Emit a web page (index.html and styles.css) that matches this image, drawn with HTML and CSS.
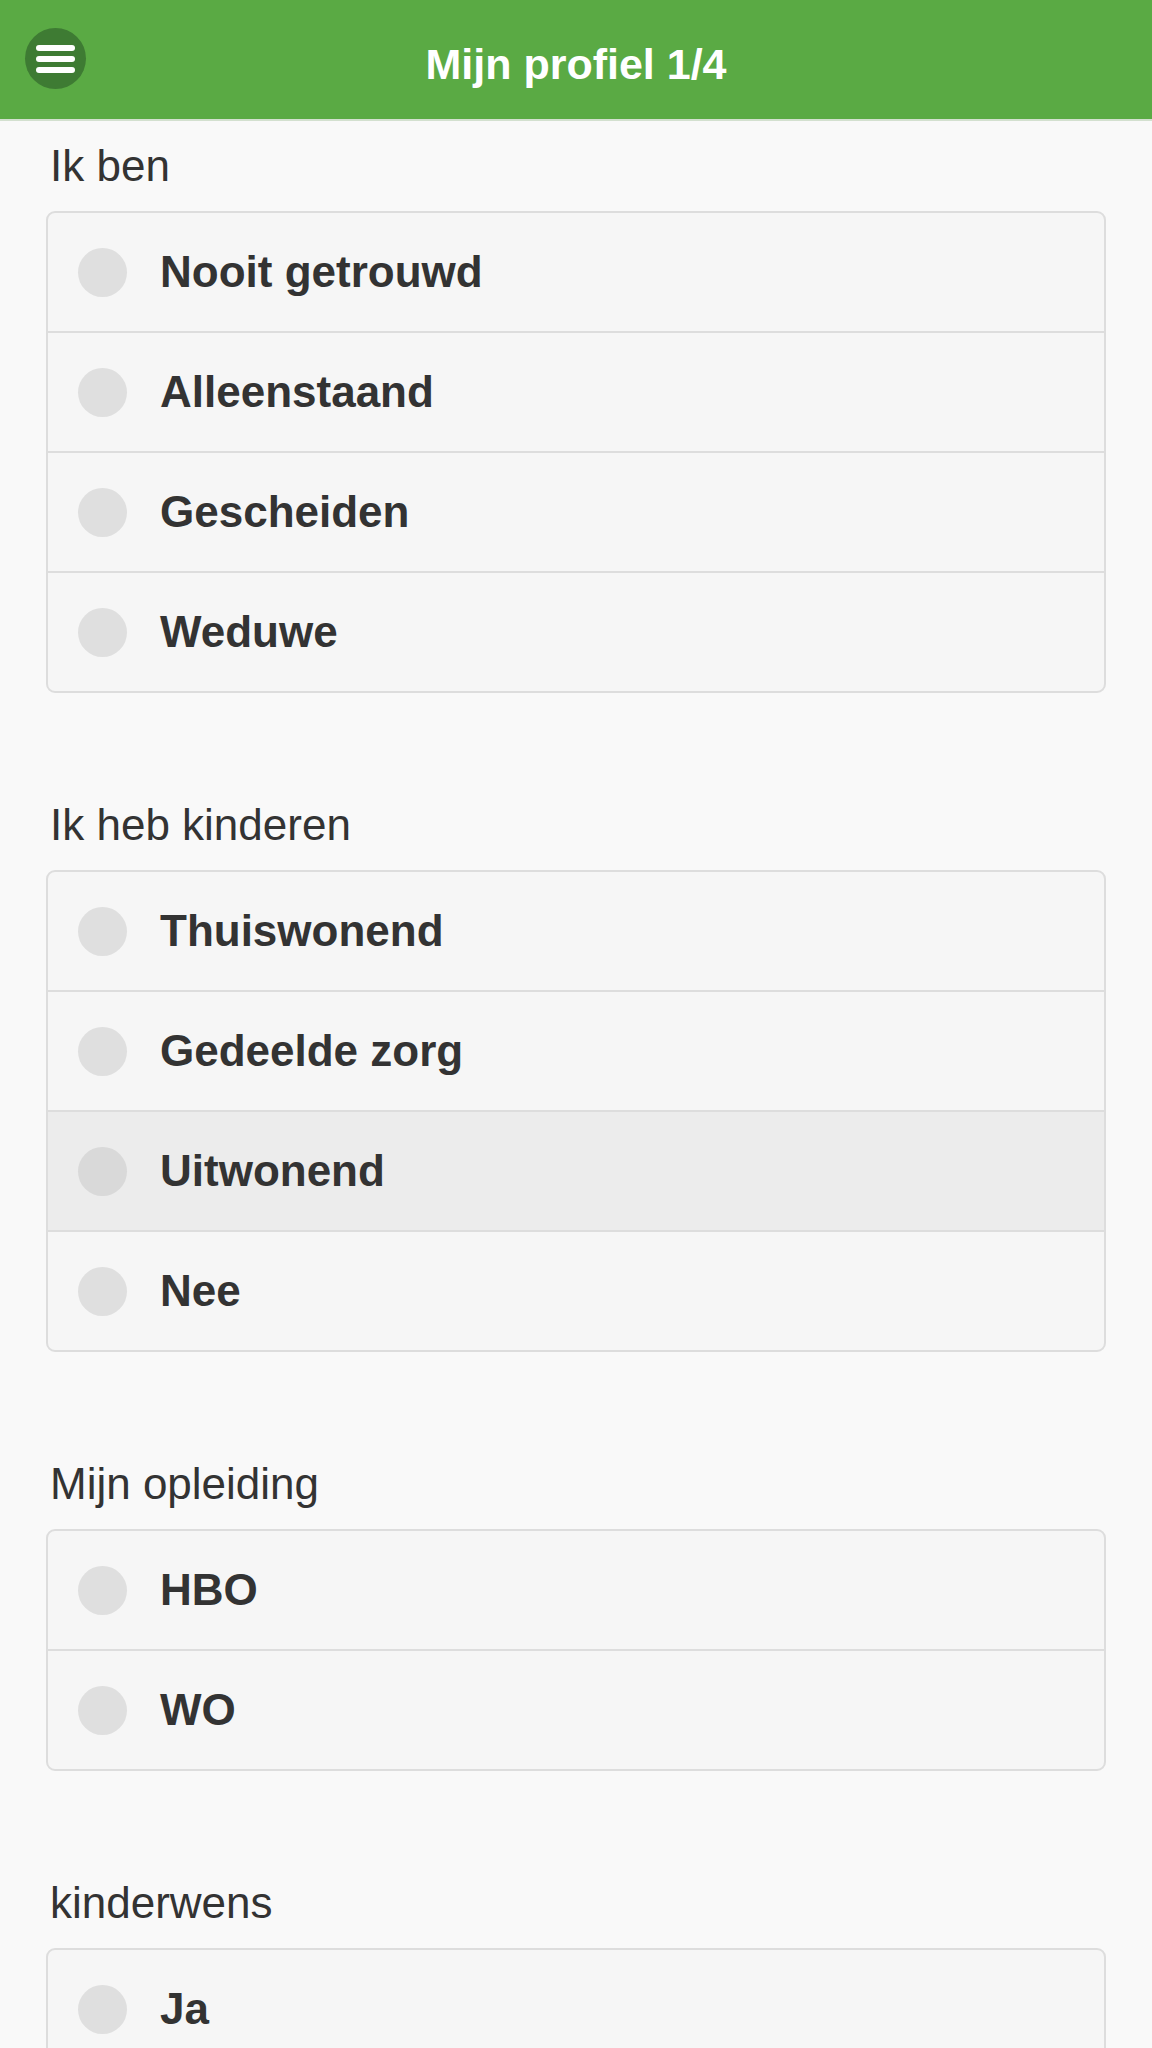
FILE: index.html
```html
<!DOCTYPE html>
<html lang="nl">
<head>
<meta charset="utf-8">
<title>Mijn profiel 1/4</title>
<link rel="stylesheet" href="styles.css">
</head>
<body>
<header class="topbar">
  <div class="menu-btn" aria-label="Menu">
    <span class="bar"></span>
    <span class="bar"></span>
    <span class="bar"></span>
  </div>
  <h1 class="title">Mijn profiel 1/4</h1>
  <div class="spacer"></div>
</header>

<main class="content">
  <section class="group">
    <div class="group-label">Ik ben</div>
    <div class="card">
      <div class="row"><span class="radio"></span><span class="row-text">Nooit getrouwd</span></div>
      <div class="row"><span class="radio"></span><span class="row-text">Alleenstaand</span></div>
      <div class="row"><span class="radio"></span><span class="row-text">Gescheiden</span></div>
      <div class="row"><span class="radio"></span><span class="row-text">Weduwe</span></div>
    </div>
  </section>

  <section class="group">
    <div class="group-label">Ik heb kinderen</div>
    <div class="card">
      <div class="row"><span class="radio"></span><span class="row-text">Thuiswonend</span></div>
      <div class="row"><span class="radio"></span><span class="row-text">Gedeelde zorg</span></div>
      <div class="row row-active"><span class="radio"></span><span class="row-text">Uitwonend</span></div>
      <div class="row"><span class="radio"></span><span class="row-text">Nee</span></div>
    </div>
  </section>

  <section class="group">
    <div class="group-label">Mijn opleiding</div>
    <div class="card">
      <div class="row"><span class="radio"></span><span class="row-text">HBO</span></div>
      <div class="row"><span class="radio"></span><span class="row-text">WO</span></div>
    </div>
  </section>

  <section class="group">
    <div class="group-label">kinderwens</div>
    <div class="card">
      <div class="row"><span class="radio"></span><span class="row-text">Ja</span></div>
    </div>
  </section>
</main>
</body>
</html>
```

FILE: styles.css
```css
* {
  box-sizing: border-box;
}

html, body {
  margin: 0;
  padding: 0;
}

body {
  background: #f9f9f9;
  font-family: "Liberation Sans", Arial, Helvetica, sans-serif;
  color: #333333;
}

.topbar {
  display: grid;
  grid-template-columns: 1fr auto 1fr;
  align-items: start;
  height: 121px;
  background: #5aaa44;
  border-bottom: 2px solid #d3e0cf;
}

.menu-btn {
  justify-self: start;
  margin-left: 25px;
  margin-top: 28px;
  width: 61px;
  height: 61px;
  border-radius: 50%;
  background: #3e7b33;
  display: flex;
  flex-direction: column;
  align-items: center;
  justify-content: center;
  gap: 5px;
}

.menu-btn .bar {
  display: block;
  width: 39px;
  height: 6px;
  border-radius: 3px;
  background: #ffffff;
}

.title {
  margin: 39px 0 0 0;
  font-size: 43px;
  line-height: 50px;
  font-weight: 700;
  color: #ffffff;
  white-space: nowrap;
}

.content {
  padding: 20px 46px 0 46px;
  display: flex;
  flex-direction: column;
  gap: 107px;
}

.group {
  display: flex;
  flex-direction: column;
  gap: 20px;
}

.group-label {
  margin-left: 4px;
  font-size: 44px;
  line-height: 50px;
  font-weight: 400;
  color: #333333;
}

.card {
  background: #f6f6f6;
  border: 2px solid #dddddd;
  border-radius: 9px;
  overflow: hidden;
}

.row {
  display: flex;
  align-items: center;
  gap: 33px;
  height: 118px;
  padding-left: 30px;
}

.row + .row {
  height: 120px;
  border-top: 2px solid #dddddd;
}

.row-active {
  background: #ececec;
}

.radio {
  flex: 0 0 auto;
  width: 49px;
  height: 49px;
  border-radius: 50%;
  background: #dfdfdf;
}

.row-active .radio {
  background: #d9d9d9;
}

.row-text {
  font-size: 44px;
  font-weight: 700;
  color: #333333;
  line-height: 50px;
}
```
